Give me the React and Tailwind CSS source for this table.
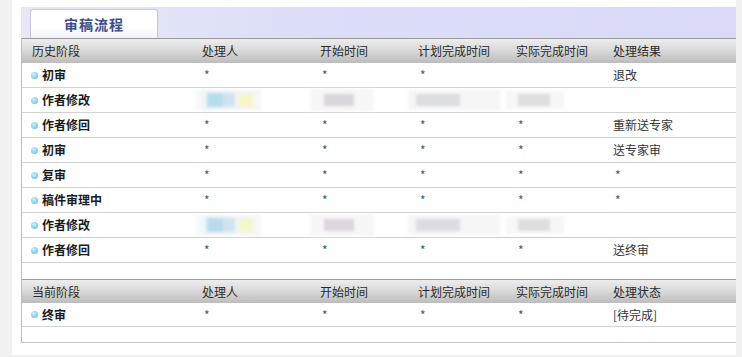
import React from "react";

const font = { fontFamily: '"Noto Sans CJK SC", "Noto Sans", sans-serif' };

const cols = ["w-[170px]", "w-[118px]", "w-[98px]", "w-[98px]", "w-[97px]", "w-[140px]"];

function Bullet() {
  return (
    <span className="inline-block w-[7px] h-[7px] rounded-full mr-[4px] bg-[radial-gradient(circle_at_40%_35%,#d2f0fb_0%,#86cdea_60%,#62b4d9_100%)]" />
  );
}

function Header({ first, last, h = "h-[25px]" }) {
  const labels = [first, "处理人", "开始时间", "计划完成时间", "实际完成时间", last];
  return (
    <div className={`flex ${h} items-center border-t border-[#9a9a9a] bg-[linear-gradient(to_bottom,#ededed,#d8d8d8_50%,#bcbcbc)] text-[12px] text-[#2a2a2a]`}>
      {labels.map((l, i) => (
        <div key={i} className={`${cols[i]} pl-[10px] shrink-0`}>{l}</div>
      ))}
    </div>
  );
}

function BlurCells() {
  return (
    <>
      <div className={`${cols[1]} shrink-0 h-full flex items-center`}>
        <div className="flex items-center h-[20px] pl-[15px] pr-[8px] bg-[linear-gradient(to_right,#ffffff,#eef3f7_20%,#f4f6f8)] blur-[1.5px]">
          <span className="w-[16px] h-[14px] bg-[#b8dcee]" />
          <span className="w-[12px] h-[14px] bg-[#cfe4ef]" />
          <span className="w-[4px]" />
          <span className="w-[14px] h-[13px] bg-[#f6f6c9]" />
        </div>
      </div>
      <div className={`${cols[2]} shrink-0 h-full flex items-center`}>
        <div className="flex items-center h-[22px] pl-[14px] pr-[20px] bg-[#f7f7f7] blur-[1.5px]">
          <span className="w-[30px] h-[12px] bg-[#ddd5dc]" />
        </div>
      </div>
      <div className={`${cols[3]} shrink-0 h-full flex items-center`}>
        <div className="flex items-center h-[20px] pl-[8px] pr-[40px] bg-[#f6f6f6] blur-[1.5px]">
          <span className="w-[44px] h-[12px] bg-[#dcdce3]" />
        </div>
      </div>
      <div className={`${cols[4]} shrink-0 h-full flex items-center`}>
        <div className="flex items-center h-[18px] pl-[12px] pr-[14px] bg-[#f7f7f7] blur-[1.5px]">
          <span className="w-[32px] h-[12px] bg-[#dedede]" />
        </div>
      </div>
    </>
  );
}

function Row({ stage, vals, blur, h = "h-[25px]" }) {
  return (
    <div className={`flex ${h} items-center border-b border-[#d2d2d2] text-[12px] text-[#333]`}>
      <div className={`${cols[0]} shrink-0 pl-[9px] flex items-center font-bold text-[#1a1a1a]`}>
        <Bullet />
        {stage}
      </div>
      {blur ? (
        <BlurCells />
      ) : (
        vals.map((v, i) => (
          <div key={i} className={`${cols[i + 1]} shrink-0 ${v === "*" ? "pl-[12px] text-[#555]" : "pl-[10px]"}`}>{v}</div>
        ))
      )}
    </div>
  );
}

const history = [
  ["初审", ["*", "*", "*", "", "退改"]],
  ["作者修改", [], true],
  ["作者修回", ["*", "*", "*", "*", "重新送专家"]],
  ["初审", ["*", "*", "*", "*", "送专家审"]],
  ["复审", ["*", "*", "*", "*", "*"]],
  ["稿件审理中", ["*", "*", "*", "*", "*"]],
  ["作者修改", [], true],
  ["作者修回", ["*", "*", "*", "*", "送终审"]],
];

export default function App() {
  return (
    <div className="w-[742px] h-[357px] bg-[#f1f1f1] flex overflow-hidden" style={font}>
      <div className="w-[12px] shrink-0" />
      <div className="w-[724px] h-[355px] bg-white pt-[7px] pl-[9px] overflow-hidden shrink-0">
        <div className="w-[740px]">
          <div className="h-[31px] flex items-end bg-[linear-gradient(to_right,#e6e8f7,#dcdef8_40%,#d9d9f7)]">
            <div className="ml-[9px] w-[128px] h-[29px] border border-b-0 border-[#c5c8de] rounded-t-[3px] bg-[linear-gradient(to_bottom,#ffffff,#ffffff_60%,#f1f2fb)] flex items-center justify-center text-[14px] font-bold text-[#3d4c8c] tracking-[1px]">
              审稿流程
            </div>
          </div>
          <div className="border-l border-[#bdbdbd]">
            <Header first="历史阶段" last="处理结果" />
            {history.map(([s, v, b], i) => (
              <Row key={i} stage={s} vals={v} blur={b} />
            ))}
            <div className="h-[16px]" />
            <Header first="当前阶段" last="处理状态" h="h-[24px]" />
            <Row stage="终审" vals={["*", "*", "*", "*", "[待完成]"]} h="h-[24px]" />
            <div className="h-[16px] border-b border-[#c4c4c4]" />
          </div>
        </div>
      </div>
    </div>
  );
}
